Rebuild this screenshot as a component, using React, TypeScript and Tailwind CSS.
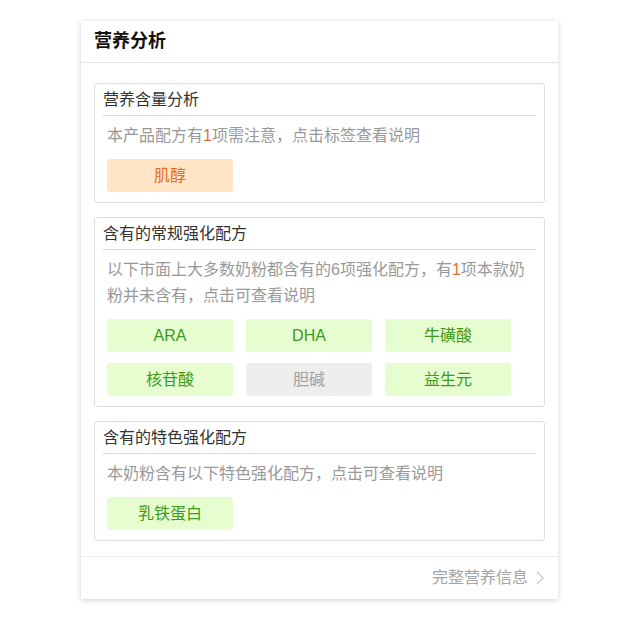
import React from "react";

const font = { fontFamily: '"Microsoft YaHei", "Liberation Sans", "Noto Sans CJK SC", sans-serif' };

type TagKind = "warn" | "ok" | "off";

function Tag({ label, kind }: { label: string; kind: TagKind }) {
  const cls =
    kind === "warn"
      ? "bg-[#ffe5c6] text-[#e0702e]"
      : kind === "ok"
      ? "bg-[#e6fdcf] text-[#3d9a1c]"
      : "bg-[#eeeeee] text-[#a0a0a0]";
  return (
    <div className={`w-[126px] h-[33px] rounded-[3px] flex items-center justify-center text-[16px] ${cls}`}>
      {label}
    </div>
  );
}

function Section({
  title,
  children,
  tags,
}: {
  title: string;
  children: React.ReactNode;
  tags: { label: string; kind: TagKind }[];
}) {
  return (
    <div className="border border-[#dedede] rounded-[3px]">
      <div className="mx-[8px] h-[32px] flex items-center text-[16px] text-[#333] border-b border-[#dcdcdc]">
        {title}
      </div>
      <div className="px-[12px] pt-[7px] pb-[10px]">
        <div className="text-[16px] leading-[26px] text-[#999]">{children}</div>
        <div className="mt-[10px] grid grid-cols-[126px_126px_126px] gap-x-[13px] gap-y-[11px]">
          {tags.map((t) => (
            <Tag key={t.label} label={t.label} kind={t.kind} />
          ))}
        </div>
      </div>
    </div>
  );
}

export default function App() {
  return (
    <div className="w-[640px] h-[627px] bg-white pt-[21px]" style={font}>
      <div className="ml-[81px] w-[477px] bg-white shadow-[0_1px_6px_rgba(0,0,0,0.18)]">
        <div className="h-[42px] px-[13px] flex items-center border-b border-[#e3e3e3]">
          <span className="text-[18px] font-bold text-[#111]">营养分析</span>
        </div>
        <div className="px-[13px] pt-[20px] pb-[15px] flex flex-col gap-[14px]">
          <Section title="营养含量分析" tags={[{ label: "肌醇", kind: "warn" }]}>
            本产品配方有<span className="text-[#e0702e]">1</span>项需注意，点击标签查看说明
          </Section>
          <Section
            title="含有的常规强化配方"
            tags={[
              { label: "ARA", kind: "ok" },
              { label: "DHA", kind: "ok" },
              { label: "牛磺酸", kind: "ok" },
              { label: "核苷酸", kind: "ok" },
              { label: "胆碱", kind: "off" },
              { label: "益生元", kind: "ok" },
            ]}
          >
            以下市面上大多数奶粉都含有的6项强化配方，有<span className="text-[#e0702e]">1</span>项本款奶粉并未含有，点击可查看说明
          </Section>
          <Section title="含有的特色强化配方" tags={[{ label: "乳铁蛋白", kind: "ok" }]}>
            本奶粉含有以下特色强化配方，点击可查看说明
          </Section>
        </div>
        <div className="h-[43px] border-t border-[#ececec] flex items-center justify-end pr-[12px] text-[16px] text-[#a5a5a5]">
          <span>完整营养信息</span>
          <svg width="12" height="16" viewBox="0 0 12 16" className="ml-[6px]" fill="none">
            <path d="M3 2 L9 8 L3 14" stroke="#c8c8c8" strokeWidth="1.3" />
          </svg>
        </div>
      </div>
    </div>
  );
}
